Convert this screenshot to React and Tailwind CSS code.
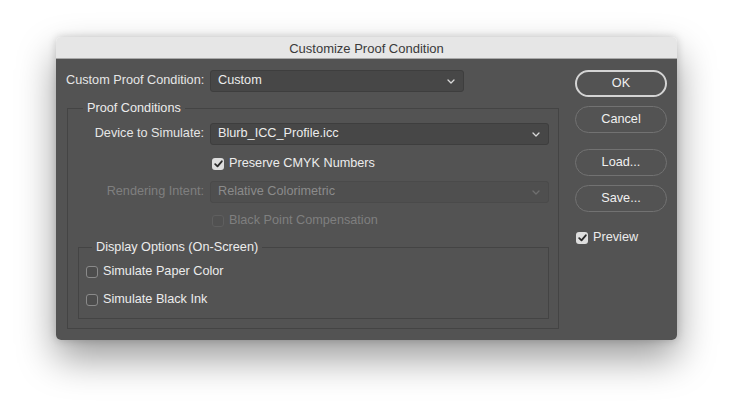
import React from "react";

const font = { fontFamily: '"Liberation Sans", Arial, sans-serif' };

function Chevron({ dim }) {
    return (
        <svg width="8" height="5" viewBox="0 0 8 5" className="shrink-0">
            <path
                d="M1 1 L4 4 L7 1"
                fill="none"
                stroke={dim ? "#6f6f6f" : "#d8d8d8"}
                strokeWidth="1.3"
                strokeLinecap="round"
                strokeLinejoin="round"
            />
        </svg>
    );
}

function Select({ value, dim, className = "" }) {
    return (
        <div
            className={`flex items-center justify-between h-[22px] rounded-[3px] border pl-[7px] pr-[8px] text-[12.7px] ${
                dim
                    ? "bg-[#4f4f4f] border-[#4a4a4a] text-[#8b8b8b]"
                    : "bg-[#474747] border-[#3e3e3e] text-[#ececec]"
            } ${className}`}
        >
            <span>{value}</span>
            <Chevron dim={dim} />
        </div>
    );
}

function Check({ checked, dim }) {
    if (checked) {
        return (
            <div className="w-[12px] h-[12px] rounded-[3px] bg-[#dedede] flex items-center justify-center shrink-0">
                <svg width="9" height="8" viewBox="0 0 9 8">
                    <path
                        d="M1.2 4.2 L3.5 6.4 L7.8 1.3"
                        fill="none"
                        stroke="#2b2b2b"
                        strokeWidth="1.8"
                        strokeLinecap="round"
                        strokeLinejoin="round"
                    />
                </svg>
            </div>
        );
    }
    return (
        <div
            className={`w-[12px] h-[12px] rounded-[3px] border shrink-0 ${
                dim ? "border-[#5f5f5f] bg-[#515151]" : "border-[#8a8a8a] bg-[#4d4d4d]"
            }`}
        />
    );
}

function CheckRow({ label, checked, dim, className = "" }) {
    return (
        <div className={`flex items-center gap-[5px] h-[18px] ${className}`}>
            <Check checked={checked} dim={dim} />
            <span className={`text-[12.7px] ${dim ? "text-[#7f7f7f]" : "text-[#ececec]"}`}>{label}</span>
        </div>
    );
}

function Button({ children, primary, className = "" }) {
    return (
        <button
            type="button"
            className={`h-[27px] w-full rounded-full text-[12.7px] text-[#f0f0f0] bg-[#535353] ${
                primary ? "border-2 border-[#d4d4d4]" : "border border-[#727272]"
            } ${className}`}
        >
            {children}
        </button>
    );
}

export default function App() {
    return (
        <div className="w-[733px] h-[414px] bg-white pt-[37px] pl-[56px]" style={font}>
            <div className="w-[621px] h-[303px] rounded-[5px] overflow-hidden flex flex-col shadow-[0_0_8px_rgba(0,0,0,0.18),0_18px_38px_rgba(0,0,0,0.4)]">
                <div className="h-[22px] shrink-0 flex items-center justify-center pt-[2px] bg-[#e6e6e6] border-b border-[#a9a9a9] text-[13px] text-[#3a3a3a]">
                    Customize Proof Condition
                </div>
                <div className="flex-1 bg-[#535353] flex pt-[11px] pl-[10px] pr-[10px]">
                    <div className="w-[493px] flex flex-col">
                        <div className="flex items-center">
                            <span className="w-[138px] text-[12.7px] text-[#e6e6e6] whitespace-nowrap">
                                Custom Proof Condition:
                            </span>
                            <Select value="Custom" className="ml-[6px] w-[254px]" />
                        </div>

                        <fieldset className="mt-[8px] ml-[1px] border border-[#444444] pb-[9px]">
                            <legend className="ml-[15px] px-[4px] text-[12.7px] text-[#ececec] leading-[16px]">
                                Proof Conditions
                            </legend>
                            <div className="flex items-center mt-[7px] pr-[9px]">
                                <span className="w-[136px] text-right text-[12.7px] text-[#e6e6e6]">
                                    Device to Simulate:
                                </span>
                                <Select value="Blurb_ICC_Profile.icc" className="ml-[6px] flex-1" />
                            </div>
                            <CheckRow
                                label="Preserve CMYK Numbers"
                                checked
                                className="mt-[10px] ml-[144px]"
                            />
                            <div className="flex items-center mt-[8px] pr-[9px]">
                                <span className="w-[136px] text-right text-[12.7px] text-[#7f7f7f]">
                                    Rendering Intent:
                                </span>
                                <Select value="Relative Colorimetric" dim className="ml-[6px] flex-1" />
                            </div>
                            <CheckRow
                                label="Black Point Compensation"
                                dim
                                className="mt-[9px] ml-[144px]"
                            />

                            <fieldset className="mt-[9px] ml-[10px] mr-[9px] border border-[#444444] pb-[9px]">
                                <legend className="ml-[13px] px-[4px] text-[12.7px] text-[#ececec] leading-[16px]">
                                    Display Options (On-Screen)
                                </legend>
                                <CheckRow label="Simulate Paper Color" className="mt-[8px] ml-[7px]" />
                                <CheckRow label="Simulate Black Ink" className="mt-[10px] ml-[7px]" />
                            </fieldset>
                        </fieldset>
                    </div>

                    <div className="w-[92px] ml-[16px] flex flex-col">
                        <Button primary>OK</Button>
                        <Button className="mt-[9px]">Cancel</Button>
                        <Button className="mt-[16px]">Load...</Button>
                        <Button className="mt-[9px]">Save...</Button>
                        <CheckRow label="Preview" checked className="mt-[17px] ml-[1px]" />
                    </div>
                </div>
            </div>
        </div>
    );
}
